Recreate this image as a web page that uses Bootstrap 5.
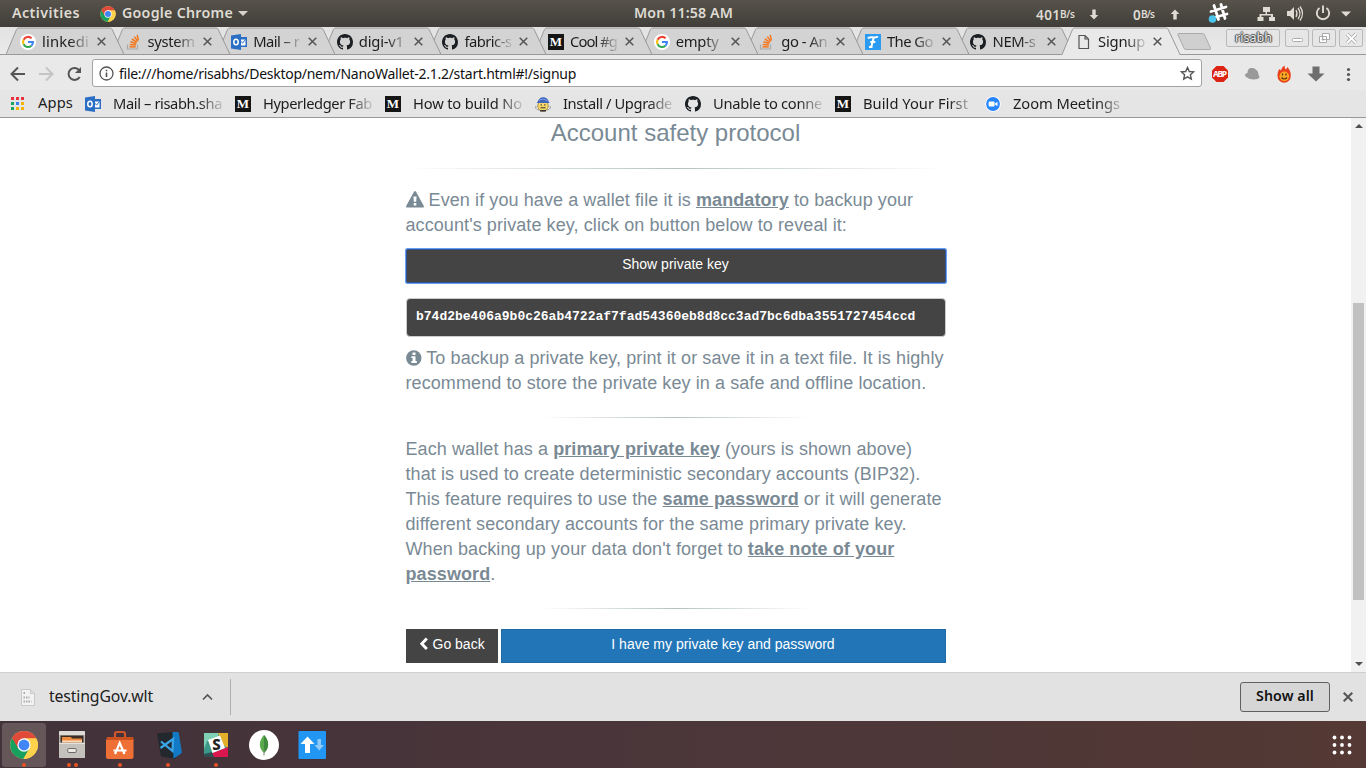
<!DOCTYPE html>
<html lang="en">
<head>
<meta charset="utf-8">
<title>NanoWallet signup</title>
<link href="https://cdn.jsdelivr.net/npm/bootstrap@5.3.0/dist/css/bootstrap.min.css" rel="stylesheet">
<style>
body{width:1366px;height:768px;overflow:hidden;font-family:"Noto Sans","Open Sans",sans-serif;color:#1d1d1d;background:#fff}
svg{flex:none;display:block}
[data-w]{white-space:nowrap;display:block;flex:none}
.topbar{height:27px;background:linear-gradient(#57534b,#403e39);color:#dfdbd2;font-size:14.2px;font-weight:600;line-height:26px}
.g-act{width:68px;margin-left:12px}
.g-clock{left:634px;top:0}
.tray{left:1036px;top:1px}
.tabstrip{height:28px;background:linear-gradient(#e2e2e2,#eaeaea)}
.edge{left:0;right:0;bottom:0;height:1px;background:#989898}
.btab{width:118px;height:28px;margin-right:-12.4px;flex:none}
.btab .shape{left:0;top:0}
.btab .inner{padding:1px 0 0 14px;height:28px}
.ttl{width:48px;height:22px;line-height:21px;font-size:14.8px;margin-left:6px;overflow:hidden;flex:none}
.fade-r{-webkit-mask-image:linear-gradient(90deg,#000 58%,rgba(0,0,0,.1) 100%);mask-image:linear-gradient(90deg,#000 58%,rgba(0,0,0,.1) 100%)}
.bm .fade-r{-webkit-mask-image:linear-gradient(90deg,#000 78%,rgba(0,0,0,.12) 100%);mask-image:linear-gradient(90deg,#000 78%,rgba(0,0,0,.12) 100%)}
.newtab{margin-left:9px;margin-top:5px}
.winbtns{right:3px;top:2px;gap:3px}
.winbtns>div{height:18px;border:1px solid #b9b9b9;border-radius:2px;background:#e6e6e6}
.usr{width:54px;margin-right:2px;font-size:12.6px;line-height:15px;color:#eee;text-shadow:0 0 1px #333,1px 0 1px #555,-1px 0 1px #555,0 1px 1px #555,0 -1px 1px #555;padding-left:8px}
.wb{width:24px}
.toolbar{height:35px;background:#e9e9e9}
.omni{width:1110px;height:28px;background:#fff;border:1px solid #a3a3a3;border-radius:3px;margin-left:10px;padding:1px 6px 0}
.url{font-size:14px;color:#111;margin-left:5px;line-height:21px}
.bmbar{height:28px;background:#e5e5e5;border-bottom:1px solid #999}
.bm{width:150px;flex:none;font-size:14.7px}
.bm .lbl{margin-left:12px;width:110px;overflow:hidden;height:22px;line-height:20px}
.apps{width:85px;flex:none;padding-left:11px;font-size:14.7px;line-height:21px}
.apps span{margin:-2px 0 0 14px}
.view{height:554px;background:#fff;overflow:hidden}
.safety{width:540px;margin-left:405.5px;font-family:"Liberation Sans",Arial,sans-serif;font-size:18px;line-height:25px;color:#7a8a95}
.safety h3{font-size:24px;line-height:26px;font-weight:400;margin:2px 0 22px}
.safety p{margin:0;letter-spacing:.088px}
.safety b{text-decoration:underline}
.rule{height:1px;background:linear-gradient(90deg,transparent,#b6c2c2 50%,transparent)}
.rule.half{width:270px;margin-left:135px}
.safety .icon{display:inline-block;vertical-align:-2px}
.btn-flat{border-radius:0;font-size:14px;line-height:20px;padding:4px 12px 8px;color:#fff;background:#444;border:1px solid #444;height:34px}
.btn-key{margin:11px 0 15px;border-color:#2f5597;outline:1px solid #669df6;outline-offset:-.5px;border-radius:1px}
.keybox{background:#444;border:1px solid #ccc;border-radius:4px;color:#fff;font:bold 13px/18.57px "Liberation Mono",monospace;padding:9px 9.5px 8.5px;height:38.5px;margin:0 0 9.5px}
.btn-go{background:#2276b8;border-color:#1e6ba8}
.sbar{width:15px;background:#f1f1f1}
.sbar .thumb{height:297px;width:11px;background:#c1c1c1;margin:0 auto}
.dlbar{height:49px;background:#e2e2e2;border-top:1px solid #cfcfcf}
.dlname{font-size:15.8px;margin-left:14px}
.dlsep{width:1px;height:36px;background:#b0b0b0;margin-left:17px}
.showall{width:90px;height:30px;border:1px solid #606060;border-radius:3px;background:#d6d6d6;font-size:14.2px;font-weight:600;color:#111;line-height:26px;padding-left:15px}
.dock{height:47px;background:linear-gradient(90deg,#42323a,#4b363a 50%,#543934)}
.app{width:44px;height:44px;margin:2px 2px 0;border-radius:3px;flex:none}
.app.on{background:#645659}
.dot{width:4px;height:4px;border-radius:50%;background:#ea5420}
.dots{bottom:0;left:0;right:0;gap:3px}
</style>
</head>
<body>
<svg width="0" height="0" class="position-absolute">
<defs>
<symbol id="chrome" viewBox="0 0 48 48"><circle cx="24" cy="24" r="23" fill="#ffd24d"/><path d="M4.100 12.500A23 23 0 0 0 23 47L33.500 29 24 24z" fill="#17a05e"/><path d="M24 13H44.200A23 23 0 0 1 23 47L33.500 29Z" fill="#ffd24d"/><path d="M4.100 12.500A23 23 0 0 1 44.200 13H24L14 29Z" fill="#e04a3a"/><circle cx="24" cy="24" r="11" fill="#fff"/><circle cx="24" cy="24" r="9" fill="#4285f4"/></symbol>
<symbol id="google" viewBox="0 0 16 16"><circle cx="8" cy="8" r="8" fill="#fff"/><g fill="none" stroke-width="2.100"><path d="M11.600 4.300A5 5 0 0 0 3.600 5.700" stroke="#ea4335"/><path d="M3.600 5.700a5 5 0 0 0 0 4.600" stroke="#fbbc05"/><path d="M3.600 10.300a5 5 0 0 0 7.800 1.400" stroke="#34a853"/><path d="M8 8h5a5 5 0 0 1-1.600 3.700" stroke="#4285f4"/></g></symbol>
<symbol id="so" viewBox="0 0 16 16"><path d="M1.500 10.500v4.500h10v-4.500" fill="none" stroke="#aaa" stroke-width="1.200"/><g stroke="#f4761c" stroke-width="1.500"><path d="M3.500 12.900h6.200"/><path d="M3.700 10.400l6.200.7"/><path d="M4.400 7.700l5.900 1.800"/><path d="M5.900 5l5 3.300"/><path d="M8.300 2.600l3.500 4.600"/><path d="M11.200.8l1.200 5.500"/></g></symbol>
<symbol id="outlook" viewBox="0 0 16 16"><path d="M7 3h9v10H7z" fill="#2a6fc4"/><path d="M9 5.500h5.500v6H9z" fill="#fff"/><path d="m9.500 7 2.200 2 2.800-3.500" fill="none" stroke="#2a6fc4"/><path d="M0 1.500 10 0v16L0 14.500z" fill="#2a6fc4"/><ellipse cx="5" cy="8" rx="2.200" ry="2.800" fill="none" stroke="#fff" stroke-width="1.500"/></symbol>
<symbol id="github" viewBox="0 0 16 16"><path fill="#1b1f23" d="M8 0C3.580 0 0 3.580 0 8c0 3.540 2.290 6.530 5.470 7.590.4.070.55-.170.55-.380 0-.190-.010-.820-.010-1.490-2.010.370-2.530-.490-2.690-.940-.090-.230-.480-.940-.820-1.130-.280-.150-.680-.520-.010-.530.630-.010 1.080.580 1.230.820.720 1.210 1.870.870 2.330.660.070-.520.280-.870.510-1.070-1.780-.200-3.640-.890-3.640-3.950 0-.870.310-1.590.820-2.150-.080-.200-.360-1.020.080-2.120 0 0 .670-.210 2.200.820.640-.180 1.320-.270 2-.270s1.360.090 2 .270c1.530-1.040 2.200-.820 2.200-.820.440 1.100.160 1.920.080 2.120.510.560.820 1.270.820 2.150 0 3.070-1.870 3.750-3.650 3.950.290.250.540.730.540 1.480 0 1.070-.010 1.930-.010 2.200 0 .210.150.460.550.380A8.010 8.010 0 0 0 16 8c0-4.420-3.580-8-8-8"/></symbol>
<symbol id="medium" viewBox="0 0 16 16"><path d="M0 0h16v16H0z" fill="#151515"/><text x="8" y="12.400" font-family="Liberation Serif,serif" font-weight="700" font-size="13" text-anchor="middle" fill="#fff">M</text></symbol>
<symbol id="fsite" viewBox="0 0 16 16"><path d="M0 0h16v16H0z" fill="#2a9bf0"/><path d="M3 4.500C4 2.600 6 3.200 8 3.400c2 .2 3.600.1 5-.9M8.700 3.500 6.300 13M4 13h3.500M5.300 8h5" fill="none" stroke="#fff" stroke-width="2"/></symbol>
<symbol id="page" viewBox="0 0 16 16"><path d="M3 1.500h6L12.500 5v9.500H3zM9 1.500V5h3.500" fill="none" stroke="#555" stroke-width="1.200"/></symbol>
<symbol id="bee" viewBox="0 0 16 16"><path d="M1 10c-1 3 2 4.500 3.500 3.500M15 10c1 3-2 4.500-3.500 3.500" fill="#fff" stroke="#777" stroke-width=".8"/><circle cx="8" cy="10" r="5.300" fill="#f7d768" stroke="#8a742e" stroke-width=".7"/><path d="M2.500 6C4 1.600 7 .4 10 1.600c2 .8 3.500 2.200 3.800 4.400l1.200 1H1.500z" fill="#3f65bd"/><path d="M4 4.200q4-2.500 8.500.5" fill="none" stroke="#7fa0e6"/><path d="M5.500 9h1.500M9 9h1.500M5.500 11.800h5" stroke="#333"/><path d="M5 14h6v1.500H5z" fill="#333"/></symbol>
<symbol id="zoom" viewBox="0 0 16 16"><circle cx="8" cy="8" r="7.800" fill="#fff"/><circle cx="8" cy="8" r="6.900" fill="#2684ff"/><rect x="3.600" y="5.600" width="6" height="4.800" rx="1" fill="#fff"/><path d="m10 7.500 2.500-1.700v4.400L10 8.500z" fill="#fff"/></symbol>
</defs></svg>

<header class="topbar position-relative d-flex">
 <span class="g-act" data-w="68">Activities</span>
 <svg class="align-self-center" style="margin-left:20px" width="16" height="16"><use href="#chrome" width="16" height="16"/></svg>
 <span style="margin-left:6px" data-w="111">Google Chrome</span>
 <svg style="margin:4px 0 0 4px" width="12" height="18"><path d="M1 7h10l-5 5z" fill="#d8d4cb"/></svg>
 <span class="g-clock position-absolute" data-w="99">Mon 11:58 AM</span>
 <svg class="position-absolute tray" width="330" height="26" viewBox="1036 1 330 26" fill="#dfdbd2">
  <text x="1036" y="19.500" font-size="13.500" textLength="24">401</text><text x="1060" y="18" font-size="10" textLength="15">B/s</text>
  <path d="M1092.300 9.500h3.400v5.500h2.600l-4.300 4.500-4.300-4.500h2.600z"/>
  <text x="1133" y="19.500" font-size="13.500">0</text><text x="1141" y="18" font-size="10" textLength="14">B/s</text>
  <path d="M1173.300 19.500h3.400V14h2.600l-4.300-4.500-4.300 4.500h2.600z"/>
  <g stroke="#fff" stroke-width="2.800" stroke-linecap="round"><path d="m1214 5.500 4.500 14M1221 4.500l4 14M1211 11.500l15-4.500M1212.500 18l14.500-4"/></g><circle cx="1212.500" cy="19" r="3.800" fill="#4bc5ee"/>
  <path d="M1263 7h7v5h-3v2h6v3h2v4h-6v-4h2v-1.500h-9.500V17h2v4h-6v-4h2v-3h6v-2h-2.500z"/>
  <path d="M1287 11h3l4-4v13l-4-4h-3z"/><path d="M1296 10q2 3.500 0 7M1298 8q4 5.500 0 11M1300 6.500q5 7 0 14" fill="none" stroke="#dfdbd2" stroke-width="1.300"/>
  <path d="M1319.500 8a6.200 6.200 0 1 0 7 0M1323 5.500v7.500" fill="none" stroke="#dfdbd2" stroke-width="1.900"/>
  <path d="M1341 11.500h10l-5 5z"/>
 </svg>
</header>

<nav class="tabstrip position-relative d-flex" id="tabs" style="padding-left:6px"><div class="edge position-absolute"></div></nav>

<div class="toolbar d-flex align-items-center">
 <svg width="82" height="35" viewBox="0 55 82 35" fill="none" stroke-width="2"><path d="M25 74H12M18 67.500 11.500 74l6.500 6.500" stroke="#555"/><path d="M39 74h13M46 67.500l6.500 6.500-6.500 6.500" stroke="#c4c4c4"/><path d="M79.500 70.500a6 6 0 1 0 .2 6.500" stroke="#555"/><path d="M81 67v6h-6z" fill="#555"/></svg>
 <div class="omni d-flex align-items-center">
  <svg width="15" height="15" viewBox="0 0 15 15" fill="none" stroke="#555" stroke-width="1.300"><circle cx="7.500" cy="7.500" r="6.500"/><path d="M7.500 6.500V11M7.500 3.800v1.500" stroke-width="1.600"/></svg>
  <span class="url" data-w="457">file:///home/risabhs/Desktop/nem/NanoWallet-2.1.2/start.html#!/signup</span>
  <svg class="ms-auto" width="15" height="15" viewBox="0 0 15 15"><path d="m7.500 1.500 1.800 4 4.300.4-3.200 2.900.9 4.300-3.800-2.200-3.800 2.200.9-4.300L1.400 5.900l4.300-.4z" fill="none" stroke="#555" stroke-width="1.400"/></svg>
 </div>
 <svg width="164" height="35" viewBox="1202 55 164 35">
  <path d="M1216.500 66h7l4.500 4.500v7l-4.500 4.500h-7l-4.500-4.500v-7z" fill="#dc2314"/><text x="1220" y="77.200" font-size="8.500" font-weight="700" text-anchor="middle" fill="#fff" textLength="14">ABP</text>
  <path d="M1245 76c0-2 1-3 2.500-3 0-4 2-5.500 5-5 3.500.5 6 3 6 7 1.500 1 1.500 3-1 4-4 1-9 .5-12.500-3z" fill="#999"/>
  <path d="M1277.500 76c0-3 .5-5 2-7l1.500 1.500c.5-2 1.500-4 3.500-5 0 2 .5 3 1.500 4l1.500-2.500c2.500 3 3.500 6 3.300 9a6.500 6.500 0 0 1-13.300 0" fill="#e8401c"/><circle cx="1284.300" cy="76.300" r="4.800" fill="#f9a825"/><path d="M1282.500 73.500v2M1286 73.500v2M1281.500 77.500q2.800 3 5.500 0" fill="none" stroke="#5a2a10" stroke-width="1.200"/>
  <path d="M1312.500 66.500h7v7h5l-8.500 8-8.500-8h5z" fill="#6e6e6e"/>
  <g fill="#555"><circle cx="1348.500" cy="69.500" r="1.600"/><circle cx="1348.500" cy="74.500" r="1.600"/><circle cx="1348.500" cy="79.500" r="1.600"/></g>
 </svg>
</div>

<div class="bmbar d-flex align-items-center" id="bookmarks">
 <div class="d-flex align-items-center apps"><svg width="13" height="13" viewBox="0 0 13 13"><g fill="#e8333c"><path d="M0 0h3v3H0zM5 0h3v3H5zM10 0h3v3h-3z"/></g><g fill="#1ca45c"><path d="M0 5h3v3H0zM0 10h3v3H0z"/></g><path d="M5 5h3v3H5z" fill="#3b7ded"/><path d="M10 5h3v3h-3zM5 10h3v3H5zM10 10h3v3h-3z" fill="#f4b400"/></svg><span data-w="35">Apps</span></div>
</div>

<main class="view d-flex">
 <div class="flex-grow-1">
  <section class="safety">
   <h3 class="text-center">Account safety protocol</h3>
   <div class="rule"></div>
   <p style="margin-top:19px"><svg class="icon" width="18" height="17" viewBox="0 0 18 17"><path fill="#7a8a95" fill-rule="evenodd" d="M8 .8q1-1.500 2 0l7.700 14q.7 1.700-1 1.700H1.300q-1.700 0-1-1.700zM7.400 5.500l.4 5.200h2.400l.4-5.200zM7.700 12v2.400h2.600V12z"/></svg> Even if you have a wallet file it is <b>mandatory</b> to backup your account's private key, click on button below to reveal it:</p>
   <button class="btn btn-flat btn-key d-block w-100">Show private key</button>
   <pre class="keybox">b74d2be406a9b0c26ab4722af7fad54360eb8d8cc3ad7bc6dba3551727454ccd</pre>
   <p><svg class="icon" width="16" height="16" viewBox="0 0 16 16"><circle cx="7.800" cy="8" r="7.700" fill="#7a8a95"/><path d="M6.500 2.600h3v2.300h-3zM5.300 6.200h4.200v4.900h1.300v1.900H5.300v-1.900h1.300V8.100H5.300z" fill="#fff"/></svg> To backup a private key, print it or save it in a text file. It is highly recommend to store the private key in a safe and offline location.</p>
   <div class="rule half" style="margin-top:21px"></div>
   <p style="margin-top:19px">Each wallet has a <b>primary private key</b> (yours is shown above)<br>that is used to create deterministic secondary accounts (BIP32).<br>This feature requires to use the <b>same password</b> or it will generate different secondary accounts for the same primary private key. When backing up your data don't forget to <b>take note of your password</b>.</p>
   <div class="rule half" style="margin-top:21px"></div>
   <div class="d-flex" style="gap:3px;margin-top:20px">
    <button class="btn btn-flat d-flex" style="width:92px"><svg width="11" height="14" viewBox="0 0 11 14" style="margin-top:3px"><path d="M7.800 1.500 2.800 6.800l5 5.300" fill="none" stroke="#fff" stroke-width="2.900"/></svg><span class="text-nowrap" style="margin-left:3px">Go back</span></button>
    <button class="btn btn-flat btn-go flex-grow-1">I have my private key and password</button>
   </div>
  </section>
 </div>
 <div class="sbar d-flex flex-column">
  <svg width="15" height="185"><path d="M4 10h8L8 6z" fill="#505050"/></svg><div class="thumb"></div><svg class="mt-auto" width="15" height="16"><path d="M4 6h8l-4 4z" fill="#505050"/></svg>
 </div>
</main>

<footer class="dlbar d-flex align-items-center">
 <svg style="margin-left:21px" width="14" height="17" viewBox="0 0 14 17"><path d="M.5.500h9l4 4v12H.5z" fill="#f2f2f2" stroke="#c9c9c9"/><g stroke="#aaa" stroke-dasharray="1.500 1"><path d="M2.500 4h2M2.500 8.500h6M2.500 12.500h8" stroke-width="2"/></g><path d="M9.500.500v4h4" fill="#ddd" stroke="#c9c9c9"/></svg>
 <span class="dlname" data-w="104">testingGov.wlt</span>
 <svg style="margin-left:49px" width="11" height="8" viewBox="0 0 11 8"><path d="m1 6.500 4.500-4.500L10 6.500" fill="none" stroke="#555" stroke-width="1.700"/></svg>
 <div class="dlsep"></div>
 <div class="showall ms-auto"><span data-w="58">Show all</span></div>
 <svg style="margin:0 13px 0 13px" width="10" height="10" viewBox="0 0 10 10"><path d="m.7.700 8.600 8.600M9.300.700.7 9.300" stroke="#555" stroke-width="2"/></svg>
</footer>

<div class="dock d-flex">
 <div class="app on position-relative"><svg width="44" height="44"><use href="#chrome" x="7.500" y="7.500" width="29" height="29"/></svg><div class="dots position-absolute d-flex justify-content-center"><i class="dot"></i></div></div>
 <div class="app position-relative"><svg width="44" height="44"><path d="M10 8h24q1 0 1 1v25q0 1-1 1H10q-1 0-1-1V9q0-1 1-1z" fill="#b9b6b1"/><path d="M10 8h24q1 0 1 1v3H9V9q0-1 1-1z" fill="#dedbd6"/><path d="M10.500 12.500h23v7h-23z" fill="#3d2c24"/><path d="M12 14h9l1 1.500h10v4H12z" fill="#ee8a3e"/><path d="M12 17.500h20v2H12z" fill="#f7dcc0"/><path d="M9 20h26v14q0 1-1 1H10q-1 0-1-1z" fill="#c4c1bc"/><path d="M9 20h26v1H9z" fill="#e4e2de"/><rect x="17.800" y="25.500" width="8.400" height="4" rx="1" fill="#eceae7" stroke="#6b6864"/></svg><div class="dots position-absolute d-flex justify-content-center"><i class="dot"></i><i class="dot"></i></div></div>
 <div class="app position-relative"><svg width="44" height="44"><path d="M17 15v-4q0-2 2-2h6q2 0 2 2v4" fill="none" stroke="#d0562a" stroke-width="2.200"/><path d="M9 14h26l1 3.500H8z" fill="#c9501f"/><path d="M8 17h27.500v17q0 2-2 2H10q-2 0-2-2z" fill="#ee7036"/><path d="m17 31 4.700-11 4.800 11M15.500 27.500h13" fill="none" stroke="#fff" stroke-width="2.200"/></svg><div class="dots position-absolute d-flex justify-content-center"><i class="dot"></i></div></div>
 <div class="app position-relative"><svg width="44" height="44"><path d="m11 10.500 15-1.500 4 2v25l-15-2.500z" fill="#23282e"/><path d="M26.500 9h5q1 0 1.300 1.200l3 18.500q0 1.300-1 2l-7.300 5z" fill="#1279c4"/><path d="m27.500 9 2.500 17-3 2 1.300 7.500-14.300-3" fill="none" stroke="#1279c4" stroke-width="0"/><path d="m15 18.500 11.500 9.500.5-12L14.500 25" fill="none" stroke="#3aa6e8" stroke-width="2.200"/></svg><div class="dots position-absolute d-flex justify-content-center"><i class="dot"></i></div></div>
 <div class="app position-relative"><svg width="44" height="44"><path d="M10 10h24v24H10z" fill="#3c9a8a"/><path d="M10 10h15l-2 5-10 3-3 8z" fill="#7fd0b4"/><path d="M24 10h10v15l-5-3z" fill="#e3b02c"/><path d="m34 24v10H19l-1-4z" fill="#dc1750"/><path d="m10 31 8-2 2 5H10z" fill="#2f4f52"/><path d="m14 17 12-4.500L31 25l-12.500 5z" fill="#fff"/><text x="22.500" y="27" text-anchor="middle" font-size="15" font-weight="800" fill="#222">S</text></svg><div class="dots position-absolute d-flex justify-content-center"><i class="dot"></i></div></div>
 <div class="app"><svg width="44" height="44"><circle cx="22" cy="22" r="15" fill="#fff"/><path d="M22 12c5.500 6 5.500 13 0 18-5.500-5-5.500-12 0-18" fill="#5aaa4b"/><path d="M22 12c5.500 6 5.500 13 0 18z" fill="#3f8a3c"/><path d="M22 27v5.500" stroke="#7d8a70"/></svg></div>
 <div class="app"><svg width="44" height="44"><rect x="8.500" y="8" width="27.500" height="28" rx="1" fill="#2196f3"/><path d="M15 30v-9h-4.500l7-7.500 7 7.500H20v9z" fill="#fff"/><path d="M27.500 16h3.500v6h3l-4.700 5.500L24.500 22h3z" fill="#8ecbf9"/></svg></div>
 <svg class="ms-auto" style="margin:13px 13px 0 0" width="22" height="22" viewBox="0 0 22 22" fill="#fff"><g id="row"><circle cx="3.500" cy="3.500" r="1.900"/><circle cx="11" cy="3.500" r="1.900"/><circle cx="18.500" cy="3.500" r="1.900"/></g><use href="#row" y="7.500"/><use href="#row" y="15"/></svg>
</div>

<script>
// Open tabs: icon, title, title width
const tabs=[["google","linkedi",47],["so","system",47],["outlook","Mail – r",46],["github","digi-v1",45],["github","fabric-s",47],["medium","Cool #g",47],["google","empty",43],["so","go - An",46],["fsite","The Go",46],["github","NEM-s",43],["page","Signup",47]];
const strip=document.getElementById("tabs");
tabs.forEach((t,i)=>{
  const on=i===tabs.length-1, d=document.createElement("div");
  d.className="btab position-relative"; d.style.zIndex=on?20:15-i;
  d.innerHTML=`<svg class="shape position-absolute" width="118" height="28"><path d="M0 28 10.500 2.500Q11.200 1 13 1H103.500Q105.500 1 106.200 2.500L118 28Z" fill="${on?'#e9e9e9':'#d3d3d3'}"/><path d="M0 27.500 10.500 2.500Q11.200 1 13 1H103.500Q105.500 1 106.200 2.500L118 27.500${on?'':'H0'}" fill="none" stroke="#999"/></svg>
  <div class="inner position-relative d-flex align-items-center"><svg width="16" height="16"><use href="#${t[0]}" width="16" height="16"/></svg><div class="ttl fade-r"><span data-w="${t[2]}">${t[1]}</span></div><svg style="margin-left:7px" width="9" height="9" viewBox="0 0 9 9"><path d="m.7.700 7.600 7.600M8.300.700.7 8.300" stroke="#555" stroke-width="1.500"/></svg></div>`;
  strip.append(d);
});
strip.insertAdjacentHTML("beforeend",`<svg class="newtab" width="36" height="20"><path d="M1.500 1.500h24q1.500 0 2 1.500l6 13q.5 1.500-1 1.500H9q-1.500 0-2-1.500L1 3Q.5 1.500 1.500 1.500z" fill="#cfcfcf" stroke="#aaa"/></svg>
<div class="winbtns position-absolute d-flex"><div class="usr"><span data-w="37">risabh</span></div>
<div class="wb"><svg width="22" height="16"><rect x="6.500" y="8.500" width="10" height="3" rx="1" fill="#fff" stroke="#aaa"/></svg></div>
<div class="wb"><svg width="22" height="16" fill="#fff" stroke="#aaa"><path d="M9.500 3.500h7v6h-7zM6.500 6.500h7v6h-7zM9 9h2v1H9z"/></svg></div>
<div class="wb"><svg width="22" height="16"><path d="m7 4 9 9M16 4l-9 9" stroke="#aaa" stroke-width="3.500"/><path d="m7 4 9 9M16 4l-9 9" stroke="#fff" stroke-width="1.800"/></svg></div></div>`);
const marks=[["outlook","Mail – risabh.sha",109],["medium","Hyperledger Fab",109],["medium","How to build No",109],["bee","Install / Upgrade",109],["github","Unable to conne",109],["medium","Build Your First",105],["zoom","Zoom Meetings",107]];
const bar=document.getElementById("bookmarks");
marks.forEach(m=>bar.insertAdjacentHTML("beforeend",`<div class="bm d-flex align-items-center"><svg width="16" height="16"><use href="#${m[0]}" width="16" height="16"/></svg><div class="lbl fade-r"><span data-w="${m[2]}">${m[1]}</span></div></div>`));
// Track each label to its set width
document.querySelectorAll("[data-w]").forEach(e=>{
  e.style.width="max-content";
  const w=e.getBoundingClientRect().width, want=+e.dataset.w, n=e.textContent.length;
  e.style.letterSpacing=((want-w)/n)+"px"; e.style.width=want+"px";
});
</script>
<script src="https://cdn.jsdelivr.net/npm/bootstrap@5.3.0/dist/js/bootstrap.bundle.min.js"></script>
</body>
</html>
